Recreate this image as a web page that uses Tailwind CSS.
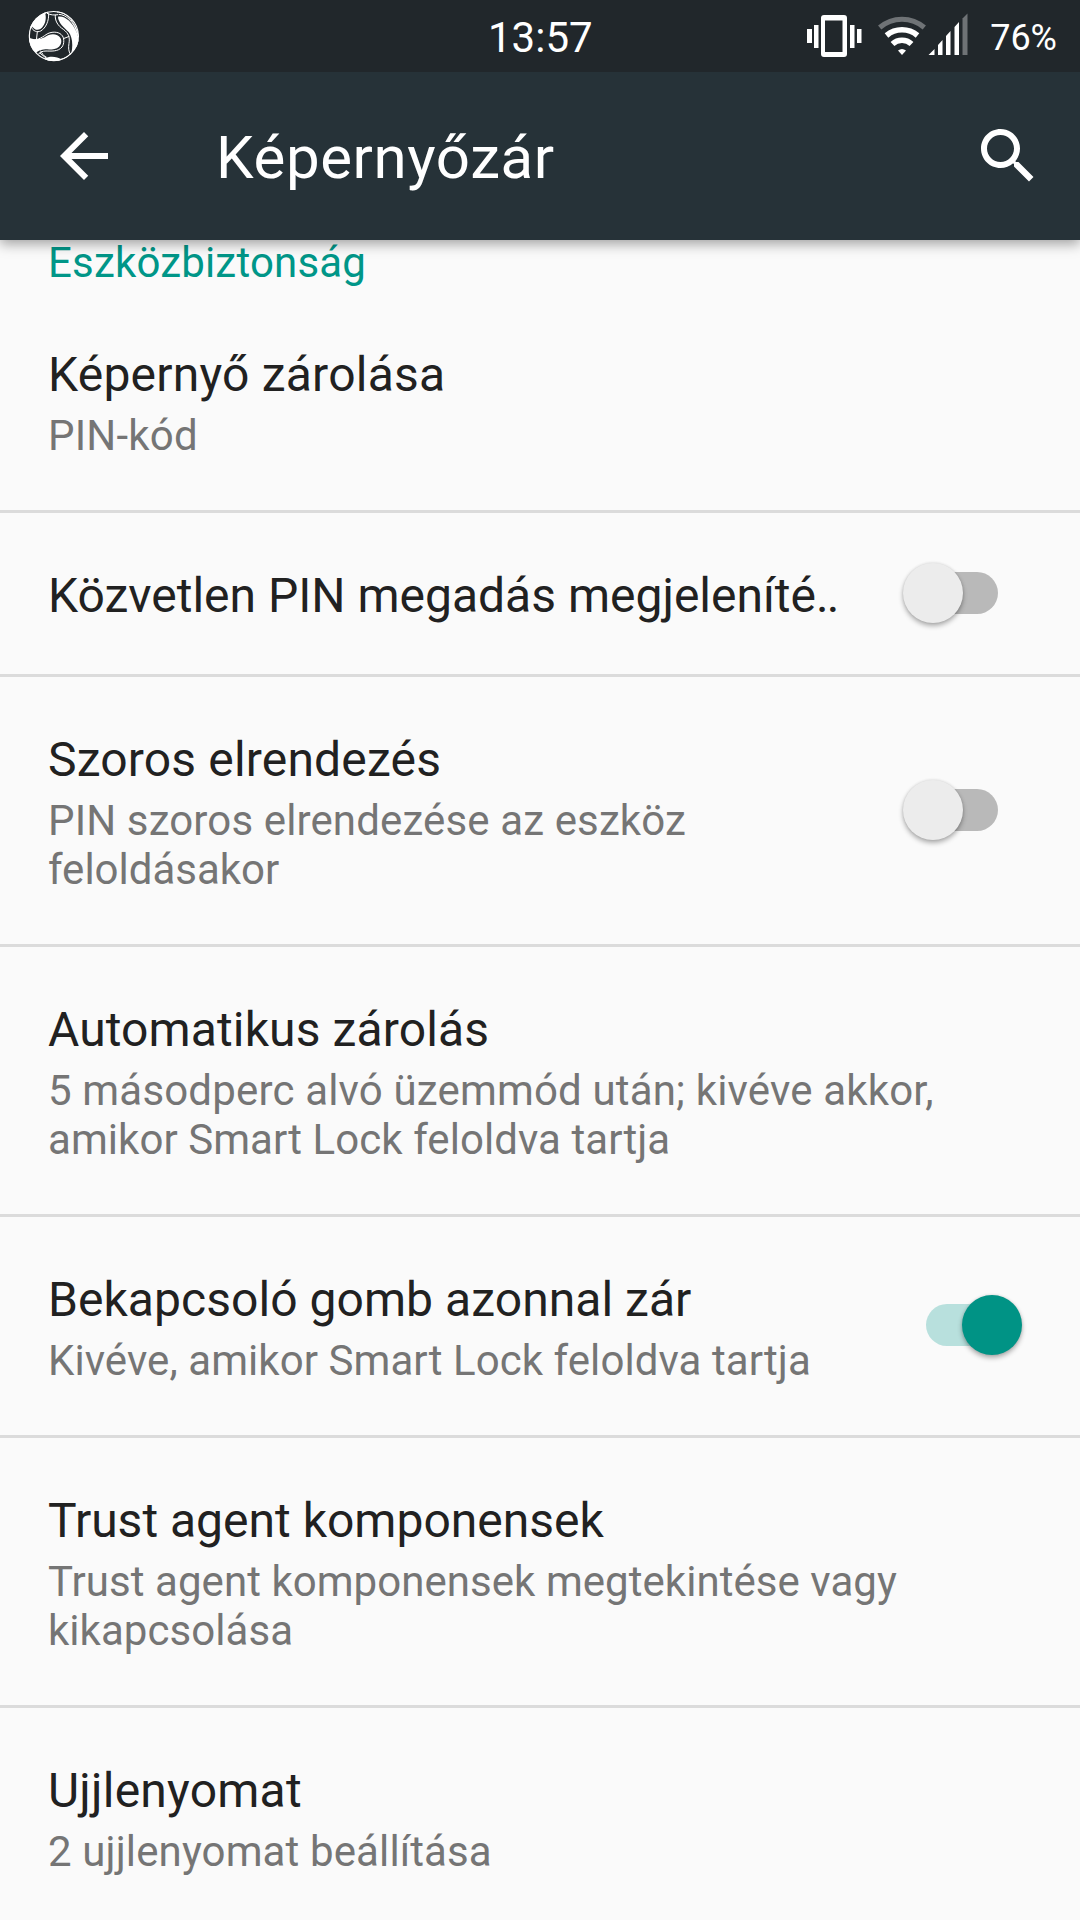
<!DOCTYPE html>
<html lang="hu">
<head>
<meta charset="utf-8">
<title>Képernyőzár</title>
<script src="https://cdn.jsdelivr.net/npm/@tailwindcss/browser@4"></script>
</head>
<body class="bg-[#fafafa]">
<div class="flex h-[1920px] w-[1080px] flex-col overflow-hidden bg-[#fafafa] font-['Roboto',sans-serif] text-[#212121]">

  <!-- Status bar -->
  <div class="relative z-20 grid h-[72px] shrink-0 grid-cols-[488px_1fr_auto] bg-[#21272b] pr-[23px] text-white">
    <svg class="mt-[10px] ml-[28px] h-[52px] w-[52px]" viewBox="84 30 156 156" fill="none" stroke="#fff" stroke-width="3">
      <defs><clipPath id="ball"><circle cx="161.500" cy="108" r="75.500"/></clipPath></defs>
      <g clip-path="url(#ball)">
        <path fill="#fff" stroke="none" d="M148 30L136 41C140 58 135 76 122 86C113 92 104 90 97 80L84 90V30Z"/>
        <path d="M146 40C147 62 138 84 122 93C112 98 98 94 94 80M141 40C152 45 162 46 174 44M112 95L109 122"/>
        <path fill="#fff" stroke="none" d="M174 50C194 46 216 66 228 92C234 104 236 118 238 130L214 160C220 132 216 110 206 96C194 84 174 68 174 50Z"/>
        <path d="M166 44C164 62 174 78 190 88C206 100 210 112 207 130C205 142 205 154 212 164M171 36C196 36 224 58 236 112M176 43C200 44 222 66 234 104"/>
        <path fill="#fff" stroke="none" d="M86 112C100 121 120 119 134 112C146 103 160 100 172 106C186 112 188 130 177 140C166 150 148 148 136 148C122 149 113 154 109 158L84 140Z"/>
        <path d="M88 118C108 124 124 114 138 104C152 94 174 94 184 104C194 112 193 132 186 141C174 156 152 153 138 153C128 153 120 156 116 162M190 116L208 109M118 158L138 174M122 152C126 160 130 168 140 172"/>
        <path fill="#fff" stroke="none" d="M134 176C148 168 168 168 188 180L180 190H140Z"/>
        <path d="M184 178C194 176 204 170 212 160"/>
      </g>
      <circle cx="161.500" cy="108" r="73.500" stroke-width="3.500"/>
    </svg>
    <div class="mt-[13px] text-[42px] leading-[49px]">13:57</div>
    <div class="flex">
      <svg class="mt-[12px] h-[48px] w-[56px]" viewBox="0 0 56 48" fill="#fff">
        <path fill-rule="evenodd" d="M18 3h20a3 3 0 0 1 3 3v36a3 3 0 0 1-3 3H18a3 3 0 0 1-3-3V6a3 3 0 0 1 3-3zM19 8.500v31.500h17.500V8.500z"/>
        <path d="M1 17h5v14H1zM8 13h4.500v23H8zM44 13h4.500v23H44zM51 17h4.500v14H51z"/>
      </svg>
      <svg class="mt-[12px] ml-[15px] h-[48px] w-[50px]" viewBox="0 0 50 48" fill="none">
        <path d="M2.700 15.500A34 34 0 0 1 47.300 15.500" stroke="#6f7376" stroke-width="5"/>
        <path d="M9.500 23.500A24 24 0 0 1 40.500 23.500" stroke="#fff" stroke-width="5.600"/>
        <path d="M15.500 32A14 14 0 0 1 34.500 32" stroke="#fff" stroke-width="5.600"/>
        <path d="M25 43L21 38.500Q25 35.500 29 38.500Z" fill="#fff"/>
      </svg>
      <svg class="mt-[12px] h-[48px] w-[42px]" viewBox="0 0 42 48" fill="#fff">
        <path d="M1.500 43L7.500 37V43ZM11 43V33L15.500 28V43ZM19 43V24L23.500 19V43ZM27.500 43V15L32 10V43Z"/>
        <path fill="#6f7376" d="M35.500 43V6.500L40.500 1.500V43Z"/>
      </svg>
      <div class="mt-[17px] ml-[21px] text-[36px] leading-[42px]">76%</div>
    </div>
  </div>

  <!-- App bar -->
  <header class="relative z-10 flex h-[168px] shrink-0 items-center bg-[#263238] pr-[36px] pl-[48px] text-white shadow-[0_4px_12px_rgba(0,0,0,0.36)]">
    <svg class="h-[72px] w-[72px]" viewBox="0 0 24 24" fill="currentColor"><path d="M20 11H7.830l5.590-5.590L12 4l-8 8 8 8 1.410-1.410L7.830 13H20v-2z"/></svg>
    <h1 class="ml-[96px] flex-1 pt-[4px] text-[60px] leading-[70px] tracking-[0.6px]">Képernyőzár</h1>
    <svg class="h-[72px] w-[72px]" viewBox="0 0 24 24" fill="currentColor"><path d="M15.500 14h-.790l-.280-.270C15.410 12.590 16 11.110 16 9.500 16 5.910 13.090 3 9.500 3S3 5.910 3 9.500 5.910 16 9.500 16c1.610 0 3.090-.590 4.230-1.570l.270.280v.790l5 4.990L20.490 19l-4.990-5zm-6 0C7.010 14 5 11.990 5 9.500S7.010 5 9.500 5 14 7.010 14 9.500 11.990 14 9.500 14z"/></svg>
  </header>

  <main class="flex flex-col">
    <div class="h-[52px] px-[48px]">
      <h2 class="mt-[-2px] text-[42px] leading-[49px] tracking-[0.18px] text-[#009688]">Eszközbiztonság</h2>
    </div>

    <section class="h-[221px] border-b-[3px] border-[#dbdbdb] px-[48px] pt-[54px]">
      <div class="text-[48px] leading-[57px] tracking-[0.22px]">Képernyő zárolása</div>
      <div class="mt-[8px] text-[42px] leading-[49px] tracking-[0.2px] text-[#757575]">PIN-kód</div>
    </section>

    <section class="flex h-[164px] items-center justify-between border-b-[3px] border-[#dbdbdb] pr-[82px] pb-[1px] pl-[48px]">
      <div class="self-start pt-[54px] text-[48px] leading-[57px] whitespace-nowrap">Közvetlen PIN megadás megjeleníté<span class="tracking-[-2px]">..</span></div>
      <div class="relative h-[42px] w-[72px] shrink-0 rounded-full bg-[#b9b9b9]">
        <div class="absolute top-[-9px] left-[-23.500px] size-[60px] rounded-full bg-[#ececec] shadow-[0_3px_5px_rgba(0,0,0,0.3),0_0_3px_rgba(0,0,0,0.12)]"></div>
      </div>
    </section>

    <section class="flex h-[270px] items-center justify-between border-b-[3px] border-[#dbdbdb] pr-[82px] pb-[1px] pl-[48px]">
      <div class="self-start pt-[54px]">
        <div class="text-[48px] leading-[57px] tracking-[0.17px]">Szoros elrendezés</div>
        <div class="mt-[8px] text-[42px] leading-[49px] text-[#757575]"><span class="tracking-[0.13px]">PIN szoros elrendezése az eszköz</span><br>feloldásakor</div>
      </div>
      <div class="relative h-[42px] w-[72px] shrink-0 rounded-full bg-[#b9b9b9]">
        <div class="absolute top-[-9px] left-[-23.500px] size-[60px] rounded-full bg-[#ececec] shadow-[0_3px_5px_rgba(0,0,0,0.3),0_0_3px_rgba(0,0,0,0.12)]"></div>
      </div>
    </section>

    <section class="h-[270px] border-b-[3px] border-[#dbdbdb] px-[48px] pt-[54px]">
      <div class="text-[48px] leading-[57px] tracking-[0.12px]">Automatikus zárolás</div>
      <div class="mt-[8px] text-[42px] leading-[49px] whitespace-nowrap text-[#757575]"><span class="tracking-[0.17px]">5 másodperc alvó üzemmód után; kivéve akkor,</span><br><span class="tracking-[0.06px]">amikor Smart Lock feloldva tartja</span></div>
    </section>

    <section class="flex h-[221px] items-center justify-between border-b-[3px] border-[#dbdbdb] pr-[82px] pb-[2px] pl-[48px]">
      <div class="self-start pt-[54px]">
        <div class="text-[48px] leading-[57px] tracking-[0.05px]">Bekapcsoló gomb azonnal zár</div>
        <div class="mt-[8px] text-[42px] leading-[49px] tracking-[0.07px] whitespace-nowrap text-[#757575]">Kivéve, amikor Smart Lock feloldva tartja</div>
      </div>
      <div class="relative h-[42px] w-[72px] shrink-0 rounded-full bg-[#b8e0dd]">
        <div class="absolute top-[-9px] left-[35.500px] size-[60px] rounded-full bg-[#009385] shadow-[0_3px_5px_rgba(0,0,0,0.3),0_0_3px_rgba(0,0,0,0.12)]"></div>
      </div>
    </section>

    <section class="h-[270px] border-b-[3px] border-[#dbdbdb] px-[48px] pt-[54px]">
      <div class="text-[48px] leading-[57px]">Trust agent komponensek</div>
      <div class="mt-[8px] text-[42px] leading-[49px] whitespace-nowrap text-[#757575]"><span class="tracking-[0.05px]">Trust agent komponensek megtekintése vagy</span><br><span class="tracking-[0.06px]">kikapcsolása</span></div>
    </section>

    <section class="h-[212px] px-[48px] pt-[54px]">
      <div class="text-[48px] leading-[57px] tracking-[0.23px]">Ujjlenyomat</div>
      <div class="mt-[8px] text-[42px] leading-[49px] tracking-[0.12px] text-[#757575]">2 ujjlenyomat beállítása</div>
    </section>
  </main>
</div>
</body>
</html>
